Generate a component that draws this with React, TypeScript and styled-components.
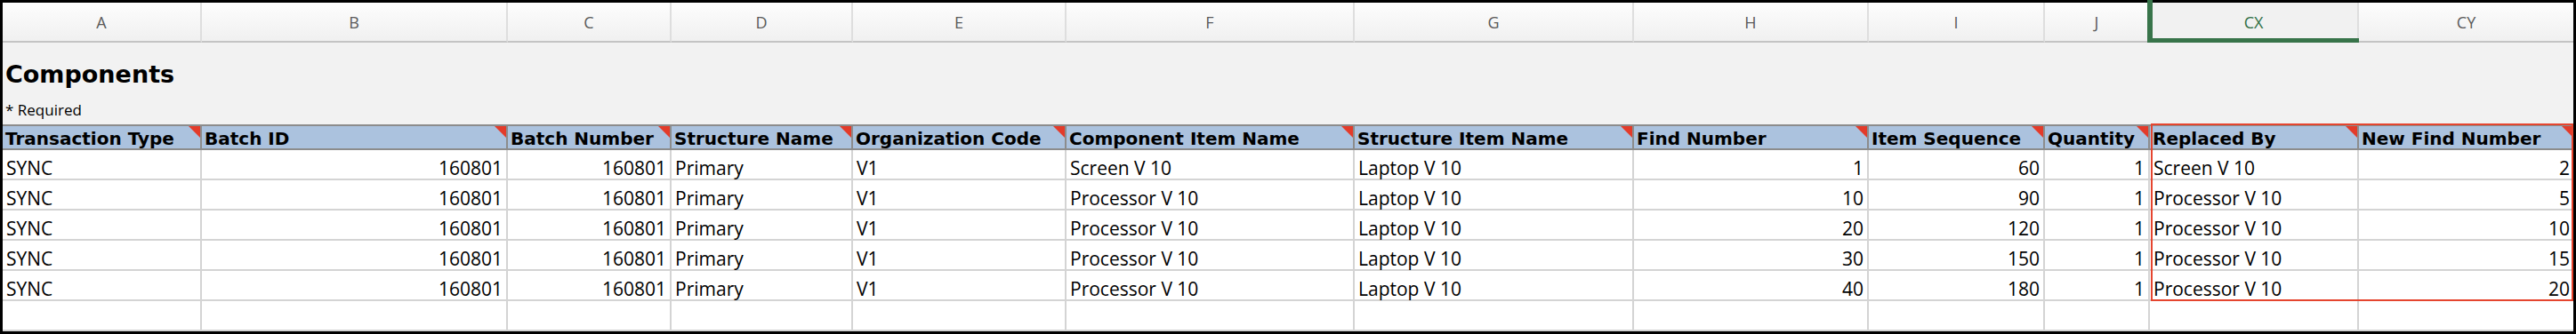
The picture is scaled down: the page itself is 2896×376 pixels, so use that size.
import styled, { createGlobalStyle } from "styled-components";

type Align = "left" | "right";

interface Column {
  letter: string;
  title: string;
  width: number;
  align: Align;
}

const columns: Column[] = [
  { letter: "A", title: "Transaction Type", width: 224, align: "left" },
  { letter: "B", title: "Batch ID", width: 344, align: "right" },
  { letter: "C", title: "Batch Number", width: 184, align: "right" },
  { letter: "D", title: "Structure Name", width: 204, align: "left" },
  { letter: "E", title: "Organization Code", width: 240, align: "left" },
  { letter: "F", title: "Component Item Name", width: 324, align: "left" },
  { letter: "G", title: "Structure Item Name", width: 314, align: "left" },
  { letter: "H", title: "Find Number", width: 264, align: "right" },
  { letter: "I", title: "Item Sequence", width: 198, align: "right" },
  { letter: "J", title: "Quantity", width: 118, align: "right" },
  { letter: "CX", title: "Replaced By", width: 235, align: "left" },
  { letter: "CY", title: "New Find Number", width: 241, align: "right" },
];

const rows: string[][] = [
  ["SYNC", "160801", "160801", "Primary", "V1", "Screen V 10", "Laptop V 10", "1", "60", "1", "Screen V 10", "2"],
  ["SYNC", "160801", "160801", "Primary", "V1", "Processor V 10", "Laptop V 10", "10", "90", "1", "Processor V 10", "5"],
  ["SYNC", "160801", "160801", "Primary", "V1", "Processor V 10", "Laptop V 10", "20", "120", "1", "Processor V 10", "10"],
  ["SYNC", "160801", "160801", "Primary", "V1", "Processor V 10", "Laptop V 10", "30", "150", "1", "Processor V 10", "15"],
  ["SYNC", "160801", "160801", "Primary", "V1", "Processor V 10", "Laptop V 10", "40", "180", "1", "Processor V 10", "20"],
];

const selectedColumn = "CX";

export default function App() {
  const template = columns.map((col) => `${col.width}px`).join(" ");
  const lastIndex = columns.length - 1;

  return (
    <>
      <GlobalStyle />
      <Sheet $template={template}>
        {columns.map((col, i) => (
          <ColumnLetter
            key={`letter-${col.letter}`}
            $selected={col.letter === selectedColumn}
            $last={i === lastIndex}
          >
            {col.letter}
          </ColumnLetter>
        ))}

        <TitleBand>
          <Title>Components</Title>
          <Required>* Required</Required>
        </TitleBand>

        {columns.map((col, i) => (
          <HeaderCell key={`head-${col.letter}`} $last={i === lastIndex}>
            {col.title}
            <Marker />
          </HeaderCell>
        ))}

        {rows.map((row, r) =>
          row.map((value, c) => (
            <DataCell
              key={`cell-${r}-${c}`}
              $align={columns[c].align}
              $last={c === lastIndex}
            >
              {value}
            </DataCell>
          ))
        )}

        {columns.map((col, i) => (
          <DataCell key={`empty-${col.letter}`} $align={col.align} $last={i === lastIndex} />
        ))}

        <SelectionBox />
      </Sheet>
    </>
  );
}

const GlobalStyle = createGlobalStyle`
  * {
    box-sizing: border-box;
  }
  body {
    margin: 0;
    background: #ffffff;
  }
`;

const Sheet = styled.div<{ $template: string }>`
  position: relative;
  width: 2896px;
  height: 376px;
  display: grid;
  grid-template-columns: ${(props) => props.$template};
  grid-template-rows: 45px 92px 29px repeat(6, 34px);
  border: 3px solid #000000;
  background: #ffffff;
`;

const ColumnLetter = styled.div<{ $selected: boolean; $last: boolean }>`
  position: relative;
  display: flex;
  align-items: center;
  justify-content: center;
  border-right: ${(props) => (props.$last ? "none" : "2px solid #dedede")};
  border-bottom: 2px solid #c4c4c4;
  background: ${(props) =>
    props.$selected ? "#f1f1f1" : "linear-gradient(#fdfdfd, #f0f0f0)"};
  color: ${(props) => (props.$selected ? "#2f6f45" : "#5a5a5a")};
  font-family: "Open Sans", sans-serif;
  font-size: 18px;

  ${(props) =>
    props.$selected &&
    `
    &::after {
      content: "";
      position: absolute;
      top: -3px;
      left: -3px;
      right: -2px;
      bottom: -2px;
      border-left: 6px solid #38744a;
      border-bottom: 5px solid #38744a;
    }
  `}
`;

const TitleBand = styled.div`
  grid-column: 1 / -1;
  display: flex;
  flex-direction: column;
  padding: 20px 0 0 3px;
  background: #f2f2f2;
  color: #000000;
`;

const Title = styled.h1`
  margin: 0;
  font-family: "DejaVu Sans", sans-serif;
  font-weight: bold;
  font-size: 27px;
  line-height: 32px;
`;

const Required = styled.div`
  margin-top: 13px;
  font-family: "Open Sans", sans-serif;
  font-size: 17px;
  line-height: 22px;
`;

const HeaderCell = styled.div<{ $last: boolean }>`
  position: relative;
  display: flex;
  align-items: flex-end;
  padding-left: 3px;
  background: #abc2de;
  border-top: 2px solid #8c8c8c;
  border-bottom: 2px solid #8c8c8c;
  border-right: ${(props) => (props.$last ? "none" : "2px solid #8c8c8c")};
  color: #000000;
  font-family: "DejaVu Sans", sans-serif;
  font-weight: bold;
  font-size: 20px;
  line-height: 22px;
  white-space: nowrap;
  overflow: hidden;
`;

const Marker = styled.span`
  position: absolute;
  top: 0;
  right: 0;
  width: 0;
  height: 0;
  border-top: 13px solid #e33b2a;
  border-left: 13px solid transparent;
`;

const DataCell = styled.div<{ $align: Align; $last: boolean }>`
  display: flex;
  align-items: flex-end;
  justify-content: ${(props) => (props.$align === "right" ? "flex-end" : "flex-start")};
  padding: 0 4px;
  background: #ffffff;
  border-right: ${(props) => (props.$last ? "none" : "2px solid #d4d4d4")};
  border-bottom: 2px solid #d4d4d4;
  color: #000000;
  font-family: "Open Sans", sans-serif;
  font-size: 21px;
  line-height: 24px;
  white-space: nowrap;
`;

const SelectionBox = styled.div`
  position: absolute;
  grid-column: 11 / 13;
  grid-row: 3 / 9;
  top: -1px;
  left: 1px;
  right: 0;
  bottom: 0;
  border: 2px solid #e5452f;
  pointer-events: none;
`;
